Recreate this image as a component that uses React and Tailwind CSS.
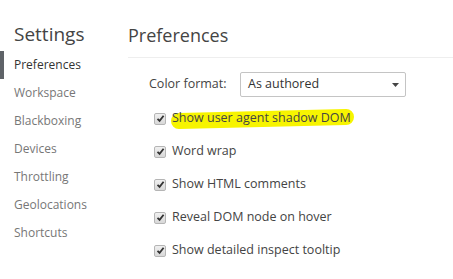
import React from "react";

const navItems = ["Preferences", "Workspace", "Blackboxing", "Devices", "Throttling", "Geolocations", "Shortcuts"];

const options = [
    { label: "Show user agent shadow DOM", marked: true },
    { label: "Word wrap" },
    { label: "Show HTML comments" },
    { label: "Reveal DOM node on hover" },
    { label: "Show detailed inspect tooltip" },
];

const CheckBox = () => (
    <span className="flex h-[12px] w-[12px] shrink-0 items-center justify-center rounded-[2px] border border-[#b5b5b5] bg-gradient-to-b from-[#f0f0f0] to-[#d8d8d8]">
        <svg width="9" height="9" viewBox="0 0 9 9">
            <path d="M1.5 4.8 L3.6 6.9 L7.6 1.8" fill="none" stroke="#333" strokeWidth="1.8" />
        </svg>
    </span>
);

export default function App() {
    return (
        <div className="flex h-[279px] w-[453px] overflow-hidden bg-white text-[#333]" style={{ fontFamily: '"Open Sans", "Noto Sans", sans-serif' }}>
            <div className="w-[128px] shrink-0">
                <div className="pl-[14px] pt-[20px] text-[19px] leading-[28px] text-[#444]">Settings</div>
                <ul className="mt-[3px]">
                    {navItems.map((item, i) => (
                        <li
                            key={item}
                            className={`flex h-[28px] items-center border-l-[4px] pl-[10px] text-[12px] ${
                                i === 0 ? "border-[#5f6368] text-[#333]" : "border-transparent text-[#777]"
                            }`}
                        >
                            {item}
                        </li>
                    ))}
                </ul>
            </div>
            <div className="flex-1">
                <div className="pt-[21px] text-[18px] leading-[28px] text-[#444]">Preferences</div>
                <div className="mt-[8px] h-px bg-[#eeeeee]" />
                <div className="pl-[21px] pt-[14px]">
                    <div className="flex items-center text-[12.5px]">
                        <span className="w-[91px] text-[#444]">Color format:</span>
                        <div className="flex h-[25px] w-[166px] items-center justify-between rounded-[2px] border border-[#c4c4c4] pl-[7px] pr-[6px] text-[#333]">
                            <span>As authored</span>
                            <svg width="7" height="4" viewBox="0 0 7 4">
                                <path d="M0 0 H7 L3.5 4 Z" fill="#444" />
                            </svg>
                        </div>
                    </div>
                    <div className="mt-[5px] flex flex-col">
                        {options.map((o) => (
                            <label key={o.label} className="flex h-[33px] items-center gap-[6px] pl-[5px] text-[12.5px] text-[#444]">
                                <CheckBox />
                                {o.marked ? (
                                    <span className="relative">
                                        <span className="absolute -left-[1px] -right-[3px] top-[2px] h-[16px] -skew-y-[1.3deg] rounded-[8px] bg-[#f7f400]" />
                                        <span className="relative">{o.label}</span>
                                    </span>
                                ) : (
                                    <span>{o.label}</span>
                                )}
                            </label>
                        ))}
                    </div>
                </div>
            </div>
        </div>
    );
}
